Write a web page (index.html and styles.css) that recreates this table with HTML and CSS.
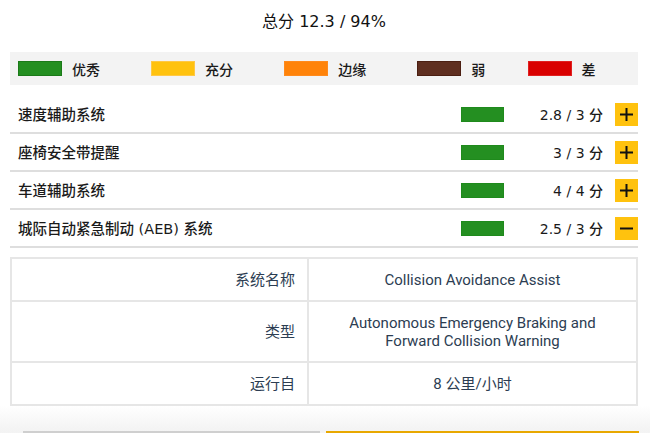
FILE: index.html
```html
<!DOCTYPE html>
<html lang="zh-CN">
<head>
<meta charset="utf-8">
<title>总分</title>
<link rel="stylesheet" href="styles.css">
</head>
<body>
<main class="page">
  <h1 class="total">总分 12.3 / 94%</h1>

  <div class="legend">
    <table class="legend-table">
      <tr>
        <td><span class="swatch swatch-good"></span><span class="legend-label">优秀</span></td>
        <td><span class="swatch swatch-adequate"></span><span class="legend-label">充分</span></td>
        <td><span class="swatch swatch-marginal"></span><span class="legend-label">边缘</span></td>
        <td><span class="swatch swatch-weak"></span><span class="legend-label">弱</span></td>
        <td><span class="swatch swatch-poor"></span><span class="legend-label">差</span></td>
      </tr>
    </table>
  </div>

  <div class="rows">
    <div class="row">
      <span class="row-label">速度辅助系统</span>
      <span class="bar"></span>
      <span class="score">2.8 / 3 分</span>
      <button class="toggle" type="button" aria-label="展开">
        <svg width="13" height="13" viewBox="0 0 13 13"><path d="M0 6.5H13M6.5 0V13" stroke="#111" stroke-width="2"/></svg>
      </button>
    </div>
    <div class="row">
      <span class="row-label">座椅安全带提醒</span>
      <span class="bar"></span>
      <span class="score">3 / 3 分</span>
      <button class="toggle" type="button" aria-label="展开">
        <svg width="13" height="13" viewBox="0 0 13 13"><path d="M0 6.5H13M6.5 0V13" stroke="#111" stroke-width="2"/></svg>
      </button>
    </div>
    <div class="row">
      <span class="row-label">车道辅助系统</span>
      <span class="bar"></span>
      <span class="score">4 / 4 分</span>
      <button class="toggle" type="button" aria-label="展开">
        <svg width="13" height="13" viewBox="0 0 13 13"><path d="M0 6.5H13M6.5 0V13" stroke="#111" stroke-width="2"/></svg>
      </button>
    </div>
    <div class="row">
      <span class="row-label">城际自动紧急制动 (AEB) 系统</span>
      <span class="bar"></span>
      <span class="score">2.5 / 3 分</span>
      <button class="toggle" type="button" aria-label="收起">
        <svg width="13" height="13" viewBox="0 0 13 13"><path d="M0 6.5H13" stroke="#111" stroke-width="2"/></svg>
      </button>
    </div>
  </div>

  <table class="details">
    <colgroup><col class="details-key-col"><col></colgroup>
    <tr>
      <td class="details-key">系统名称</td>
      <td class="details-value">Collision Avoidance Assist</td>
    </tr>
    <tr>
      <td class="details-key">类型</td>
      <td class="details-value">Autonomous Emergency Braking and<br>Forward Collision Warning</td>
    </tr>
    <tr>
      <td class="details-key">运行自</td>
      <td class="details-value">8 公里/小时</td>
    </tr>
  </table>
</main>

<footer class="footer">
  <span class="footer-btn footer-btn-secondary"></span>
  <span class="footer-btn footer-btn-primary"></span>
</footer>
</body>
</html>
```
FILE: styles.css
```css
html {
  overflow: hidden;
}

body {
  margin: 0;
  background: #fff;
  color: #1a1a1a;
  font-family: "DejaVu Sans", "Noto Sans CJK SC", sans-serif;
  font-weight: 500;
}

.page {
  padding: 0 12px 0 10px;
}

.total {
  margin: 0;
  padding-top: 12px;
  font-size: 16px;
  line-height: 20px;
  font-weight: 400;
  text-align: center;
  color: #111;
}

.legend {
  margin-top: 20px;
  height: 33px;
  padding-left: 8px;
  background: #f3f3f3;
  display: flex;
  align-items: center;
}

.legend-table {
  width: 100%;
  border-collapse: collapse;
}

.legend-table td {
  padding: 0;
  white-space: nowrap;
}

.swatch {
  display: inline-block;
  width: 44px;
  height: 15px;
  margin-right: 10px;
  vertical-align: middle;
  box-sizing: border-box;
  border: 1px solid transparent;
}

.swatch-good { background: #248f21; border-color: #1b7a19; }
.swatch-adequate { background: #ffc20e; border-color: #ffc845; }
.swatch-marginal { background: #ff8309; border-color: #ff8a1c; }
.swatch-weak { background: #5f2f20; border-color: #4b1f12; }
.swatch-poor { background: #d90000; border-color: #e02020; }

.legend-label {
  font-size: 14px;
  line-height: 20px;
  vertical-align: middle;
  position: relative;
  top: 1px;
}

.rows {
  margin-top: 11px;
}

.row {
  display: flex;
  align-items: center;
  height: 36px;
  padding-left: 8px;
  border-bottom: 2px solid #dedede;
  font-size: 14px;
}

.row-label {
  flex: 1;
  font-size: 14.5px;
  position: relative;
  top: -1px;
}

.bar {
  width: 43px;
  height: 15px;
  box-sizing: border-box;
  background: #248f21;
  border: 1px solid #1f8a1c;
}

.score {
  width: 99px;
  margin-right: 12px;
  text-align: right;
}

.toggle {
  width: 23px;
  height: 23px;
  padding: 0;
  border: none;
  background: #ffc20e;
  display: flex;
  align-items: center;
  justify-content: center;
}

.details {
  margin-top: 9px;
  width: 100%;
  border-collapse: collapse;
  border: 2px solid #e6e6e6;
  font-family: Roboto, "Noto Sans CJK SC", sans-serif;
  font-size: 15px;
  font-weight: 400;
  line-height: 18px;
  color: #2c3d52;
}

.details-key-col {
  width: 297px;
}

.details td {
  border: 2px solid #e6e6e6;
  padding: 11.5px 12px;
}

.details-key {
  text-align: right;
}

.details-value {
  text-align: center;
}

.footer {
  padding: 25px 11px 0 23px;
  height: 40px;
  background: linear-gradient(to bottom, #ffffff 0%, #f4f4f4 35%, #ebebeb 100%);
  display: flex;
  gap: 6px;
}

.footer-btn {
  height: 40px;
  box-sizing: border-box;
}

.footer-btn-secondary {
  width: 297px;
  background: #f8f8f8;
  border-top: 2px solid #cfcfcf;
}

.footer-btn-primary {
  flex: 1;
  background: #ffc20e;
  border-top: 2px solid #e8a800;
}
```
